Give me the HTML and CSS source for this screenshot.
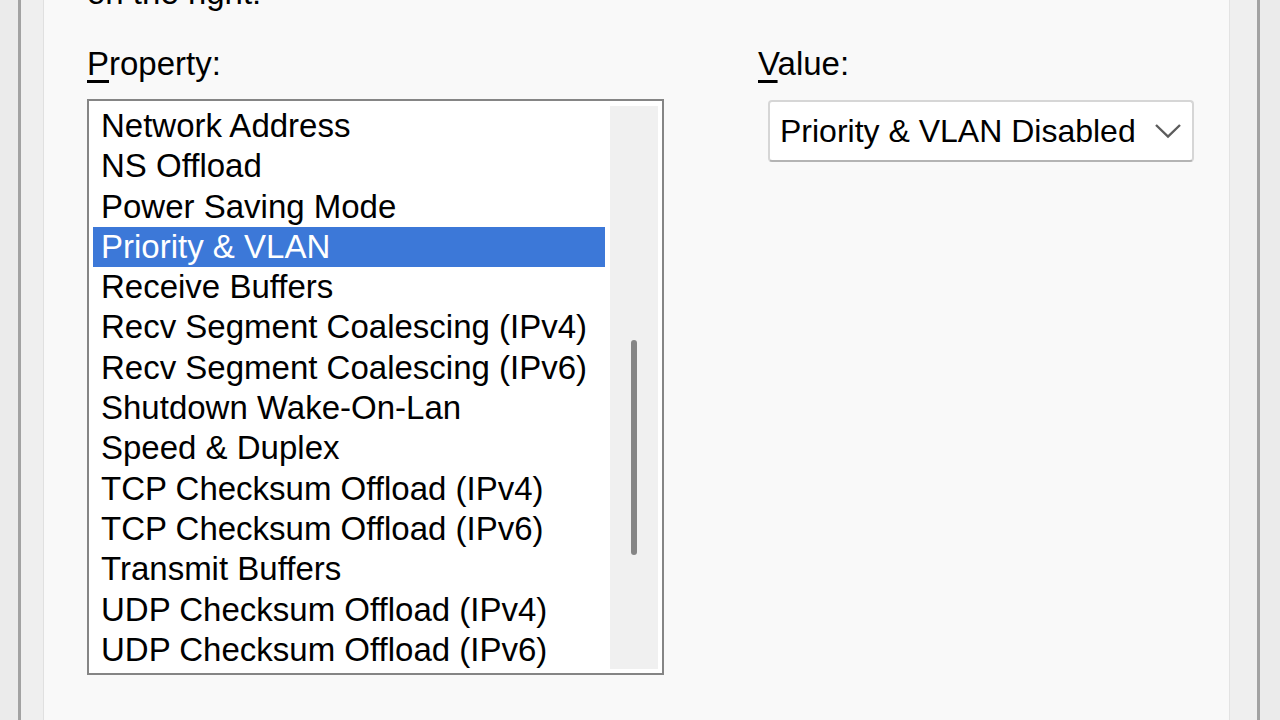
FILE: index.html
```html
<!DOCTYPE html>
<html>

<head>
    <title>Priority &amp; VLAN</title>
    <link rel="stylesheet" href="styles.css">
</head>

<body>
    <div class="edge"></div>
    <div class="edge-line"></div>
    <div class="gutter left"></div>

    <div class="panel">
        <div class="intro">on the right:</div>

        <div class="columns">
            <div class="col-property">
                <div class="label"><u>P</u>roperty:</div>
                <div class="listbox">
                    <div class="items">
                        <div class="item">Network Address</div>
                        <div class="item">NS Offload</div>
                        <div class="item">Power Saving Mode</div>
                        <div class="item selected">Priority &amp; VLAN</div>
                        <div class="item">Receive Buffers</div>
                        <div class="item">Recv Segment Coalescing (IPv4)</div>
                        <div class="item">Recv Segment Coalescing (IPv6)</div>
                        <div class="item">Shutdown Wake-On-Lan</div>
                        <div class="item">Speed &amp; Duplex</div>
                        <div class="item">TCP Checksum Offload (IPv4)</div>
                        <div class="item">TCP Checksum Offload (IPv6)</div>
                        <div class="item">Transmit Buffers</div>
                        <div class="item">UDP Checksum Offload (IPv4)</div>
                        <div class="item">UDP Checksum Offload (IPv6)</div>
                    </div>
                    <div class="scrollbar">
                        <div class="thumb"></div>
                    </div>
                </div>
            </div>

            <div class="col-value">
                <div class="label"><u>V</u>alue:</div>
                <div class="combo">
                    <span>Priority &amp; VLAN Disabled</span>
                    <svg class="chevron" width="28" height="16" viewBox="0 0 28 16">
                        <path d="M2 2 L14 13.5 L26 2" fill="none" stroke="#5c5c5c" stroke-width="2.4" />
                    </svg>
                </div>
            </div>
        </div>
    </div>

    <div class="gutter right"></div>
    <div class="edge-line"></div>
    <div class="edge"></div>
</body>

</html>
```

FILE: styles.css
```css
body {
    margin: 0;
    height: 720px;
    overflow: hidden;
    display: flex;
    background-color: #ececec;
    font-family: "Liberation Sans", Arial, sans-serif;
    font-size: 33px;
    color: #000;
}

.edge {
    width: 18px;
    background-color: #ebebeb;
}

.edge:last-child {
    width: auto;
    flex: 1;
}

.edge-line {
    width: 3px;
    background-color: #a2a2a2;
}

.gutter {
    background-color: #efefef;
}

.gutter.left {
    width: 22px;
    border-right: 1px solid #e0e0e0;
}

.gutter.right {
    width: 27px;
    border-left: 1px solid #e3e3e3;
}

.panel {
    width: 1185px;
    background-color: #f9f9f9;
    padding-left: 43px;
    box-sizing: border-box;
}

.intro {
    line-height: 40px;
    margin-top: -27px;
}

.columns {
    display: flex;
    gap: 94px;
    margin-top: 31px;
}

.label {
    line-height: 40px;
}

.label u {
    text-underline-offset: 5px;
}

.listbox {
    width: 577px;
    height: 576px;
    box-sizing: border-box;
    margin-top: 15px;
    border: 2px solid #858585;
    background-color: #fff;
    padding: 5px 4px 4px 4px;
    display: flex;
    gap: 5px;
}

.items {
    flex: 1;
}

.item {
    height: 40.3px;
    line-height: 40.3px;
    padding-left: 8px;
    white-space: nowrap;
}

.item.selected {
    background-color: #3c78d8;
    color: #fff;
}

.scrollbar {
    width: 48px;
    background-color: #f0f0f0;
    display: flex;
    justify-content: center;
}

.thumb {
    width: 6px;
    height: 215px;
    margin-top: 234px;
    border-radius: 3px;
    background-color: #858585;
}

.col-value {
    width: 436px;
}

.combo {
    margin: 16px 0 0 10px;
    height: 62px;
    box-sizing: border-box;
    border: 2px solid #d6d6d6;
    border-bottom-color: #b4b4b4;
    border-radius: 4px;
    background-color: #fff;
    padding: 0 10px;
    font-size: 32px;
    display: flex;
    align-items: center;
    justify-content: space-between;
}
```
